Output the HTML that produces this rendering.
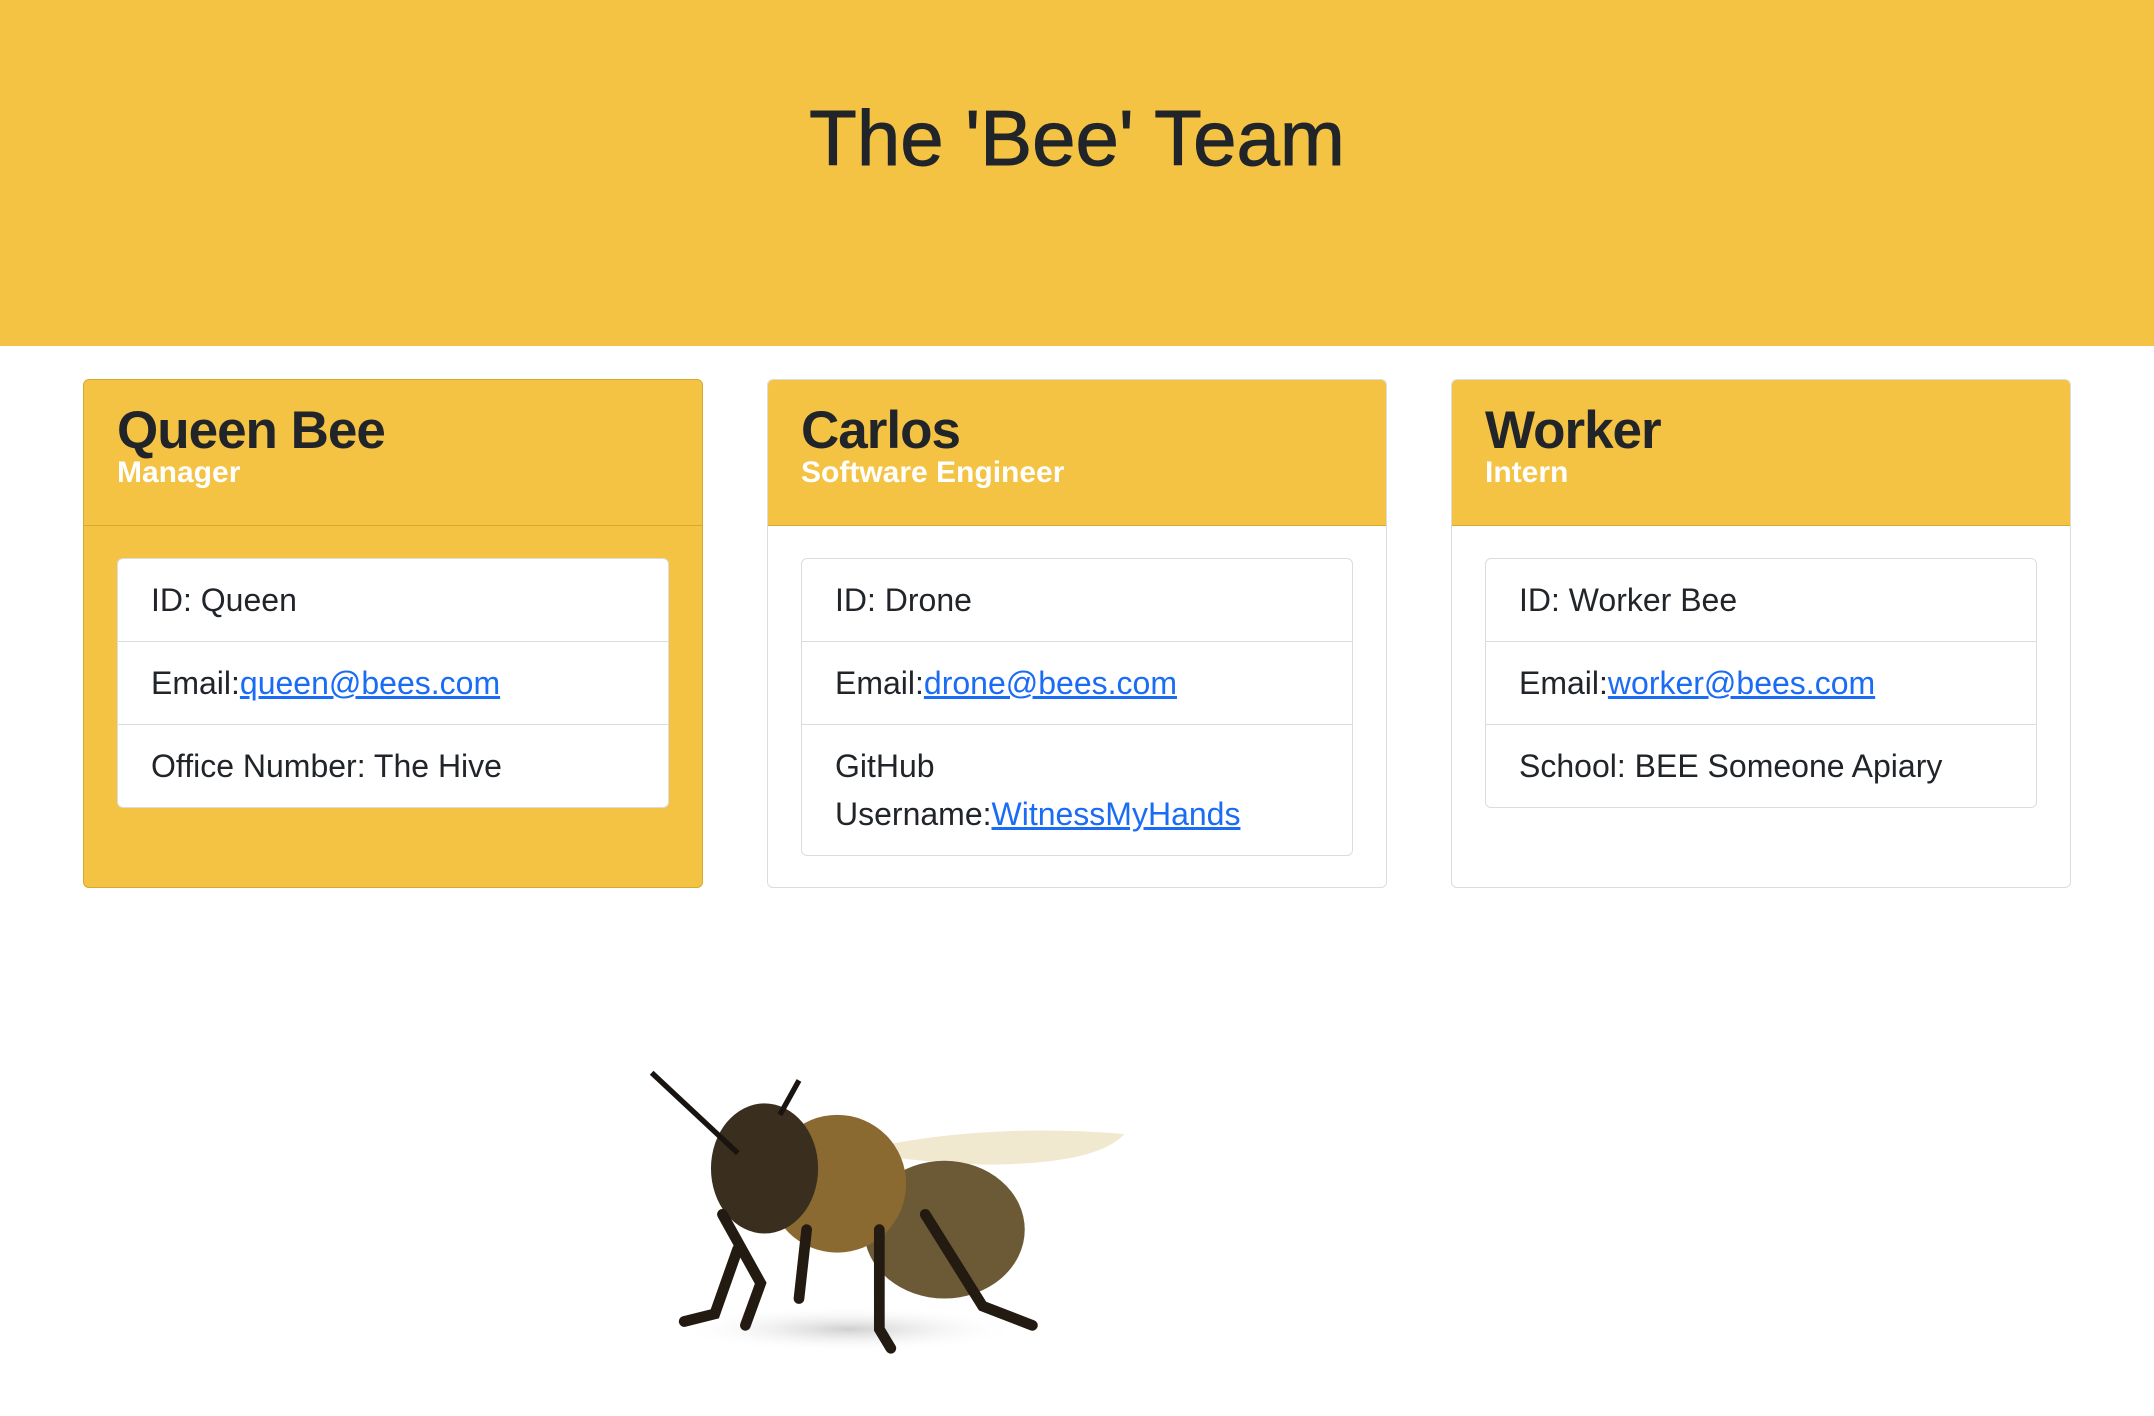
<!DOCTYPE html>
<html><head><meta charset="utf-8"><style>
*{box-sizing:border-box;margin:0;padding:0}
body{width:2154px;height:1416px;background:#fff;font-family:"Liberation Sans",Helvetica,Arial,sans-serif;color:#212529;position:relative;overflow:hidden}
.hdr{position:absolute;left:0;top:0;width:2154px;height:346px;background:#f5c343}
.hdr h1{position:absolute;left:0;right:0;top:92px;text-align:center;font-size:78px;font-weight:400;line-height:1.2;-webkit-text-stroke:1px #212529}
.card{position:absolute;top:379px;width:620px;height:509px;border:1.5px solid #dcdcdc;border-radius:6px;overflow:hidden;background:#fff}
.card.y{background:#f5c343;border-color:#d8a82e}
.ch{height:146px;background:#f5c343;border-bottom:1.5px solid #d8a82e;padding:22px 33px}
.ch h2{font-size:53px;font-weight:700;line-height:1.1;letter-spacing:-1px}
.ch h5{font-size:30px;font-weight:700;color:#fff;line-height:1.1;margin-top:-4px}
.lg{position:absolute;left:33px;right:33px;top:178px;border:1.5px solid #dcdcdc;border-radius:6px;background:#fff}
.li{padding:0 33px;font-size:32px;line-height:48px;padding-top:17px;padding-bottom:17px;border-top:1.5px solid #dcdcdc}
.li:first-child{border-top:none}
a{color:#1a6cf5;text-decoration:underline}
</style></head><body>
<div class="hdr"><h1>The 'Bee' Team</h1></div>

<div class="card y" style="left:83px">
<div class="ch"><h2>Queen Bee</h2><h5>Manager</h5></div>
<div class="lg"><div class="li">ID: Queen</div><div class="li">Email:<a>queen@bees.com</a></div><div class="li">Office Number: The Hive</div></div>
</div>

<div class="card" style="left:767px">
<div class="ch"><h2>Carlos</h2><h5>Software Engineer</h5></div>
<div class="lg"><div class="li">ID: Drone</div><div class="li">Email:<a>drone@bees.com</a></div><div class="li">GitHub<br>Username:<a>WitnessMyHands</a></div></div>
</div>

<div class="card" style="left:1451px">
<div class="ch"><h2>Worker</h2><h5>Intern</h5></div>
<div class="lg"><div class="li">ID: Worker Bee</div><div class="li">Email:<a>worker@bees.com</a></div><div class="li">School: BEE Someone Apiary</div></div>
</div>

<svg style="position:absolute;left:600px;top:1000px" width="600" height="400" viewBox="0 0 1568 1045">
<defs><radialGradient id="sh" cx="0.5" cy="0.5" r="0.5"><stop offset="0" stop-color="#bbb" stop-opacity=".7"/><stop offset="1" stop-color="#fff" stop-opacity="0"/></radialGradient></defs>
<ellipse cx="650" cy="860" rx="450" ry="60" fill="url(#sh)"/>
<path d="M690 390 Q1000 320 1370 350 Q1300 430 1000 430 Q800 420 690 400Z" fill="#e8d9b0" opacity=".6"/>
<ellipse cx="900" cy="600" rx="210" ry="180" fill="#6b5a35"/>
<ellipse cx="620" cy="480" rx="180" ry="180" fill="#8a6a30"/>
<ellipse cx="430" cy="440" rx="140" ry="170" fill="#3a2e1e"/>
<path d="M360 400 L135 190 M470 300 L520 210" stroke="#1a1410" stroke-width="14" fill="none"/>
<path d="M320 560 L420 740 L380 850 M360 650 L300 820 L220 840 M540 600 L520 780 M730 600 L730 860 L760 910 M850 560 L1000 800 L1130 850" stroke="#231a12" stroke-width="28" fill="none" stroke-linecap="round"/>
</svg>
</body></html>
